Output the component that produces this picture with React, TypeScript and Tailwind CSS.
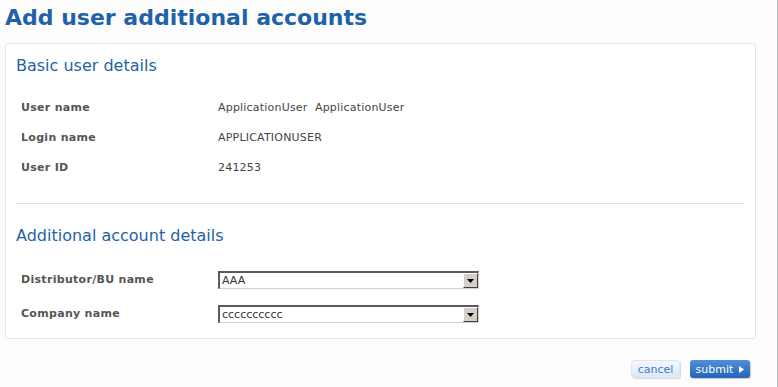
import React from "react";

const BASIC_ROWS: { label: string; value: string }[] = [
  { label: "User name", value: "ApplicationUser\u00a0\u00a0ApplicationUser" },
  { label: "Login name", value: "APPLICATIONUSER" },
  { label: "User ID", value: "241253" },
];

function FakeSelect({ value }: { value: string }) {
  return (
    <div className="flex h-[18px] w-[261px] border-t-2 border-l-2 border-t-[#5a5a5a] border-l-[#5a5a5a] border-b border-r border-b-[#d4d0c8] border-r-[#d4d0c8] bg-white">
      <div className="flex-1 pl-[2px] text-[11px] leading-[15px] text-[#333]">{value}</div>
      <div className="flex w-[15px] items-center justify-center border-t border-l border-t-white border-l-white border-b border-r border-b-[#404040] border-r-[#404040] bg-[#d4d0c8]">
        <svg width="7" height="4" viewBox="0 0 7 4">
          <path d="M0 0h7L3.5 4z" fill="#000" />
        </svg>
      </div>
    </div>
  );
}

export default function App() {
  return (
    <div
      className="relative h-[387px] w-[778px] overflow-hidden bg-[#fdfdfd]"
      style={{ fontFamily: '"DejaVu Sans", Verdana, sans-serif' }}
    >
      <div className="absolute right-0 top-0 h-full w-px bg-[#b4bec8]" />
      <h1 className="pl-[5px] pt-[3px] text-[22px] font-bold leading-[30px] text-[#1f62a8]">
        Add user additional accounts
      </h1>

      <div className="mx-[5px] mt-[10px] w-[751px] rounded-[3px] border border-[#e6e6e6] bg-white px-[10px] pb-[10px]">
        <h2 className="pt-[12px] text-[16px] leading-[20px] text-[#1f62a8]">Basic user details</h2>
        <div className="mt-[23px] flex flex-col gap-[11px] px-[5px]">
          {BASIC_ROWS.map((r) => (
            <div key={r.label} className="flex h-[19px] items-center text-[11px]">
              <div className="w-[197px] font-bold tracking-[0.3px] text-[#555]">{r.label}</div>
              <div className="tracking-[0.2px] text-[#444]">{r.value}</div>
            </div>
          ))}
        </div>
        <div className="mt-[25px] h-px bg-[#e2e2e2]" />

        <h2 className="pt-[22px] text-[16px] leading-[20px] text-[#1f62a8]">
          Additional account details
        </h2>
        <div className="mt-[25px] flex flex-col gap-[16px] px-[5px]">
          <div className="flex items-center text-[11px]">
            <div className="w-[197px] font-bold tracking-[0.3px] text-[#555]">Distributor/BU name</div>
            <FakeSelect value="AAA" />
          </div>
          <div className="flex items-center text-[11px]">
            <div className="w-[197px] font-bold tracking-[0.3px] text-[#555]">Company name</div>
            <FakeSelect value="cccccccccc" />
          </div>
        </div>
        <div className="h-[5px]" />
      </div>

      <div className="mt-[21px] flex justify-end gap-[10px] pr-[28px]">
        <button className="h-[18px] w-[49px] rounded-[3px] border border-[#dde6f0] bg-gradient-to-b from-[#f4f8fc] to-[#dde8f4] text-[11px] leading-[15px] text-[#3d7bc7] shadow-[1px_1px_1px_rgba(0,0,0,0.15)]">
          cancel
        </button>
        <button className="flex h-[18px] w-[60px] items-center justify-center gap-[6px] rounded-[3px] bg-gradient-to-b from-[#4f8fdb] to-[#2364b8] text-[11px] leading-[15px] text-white shadow-[1px_1px_1px_rgba(0,0,0,0.2)]">
          submit
          <svg width="5" height="7" viewBox="0 0 5 7">
            <path d="M0 0l5 3.5L0 7z" fill="#fff" />
          </svg>
        </button>
      </div>
    </div>
  );
}
